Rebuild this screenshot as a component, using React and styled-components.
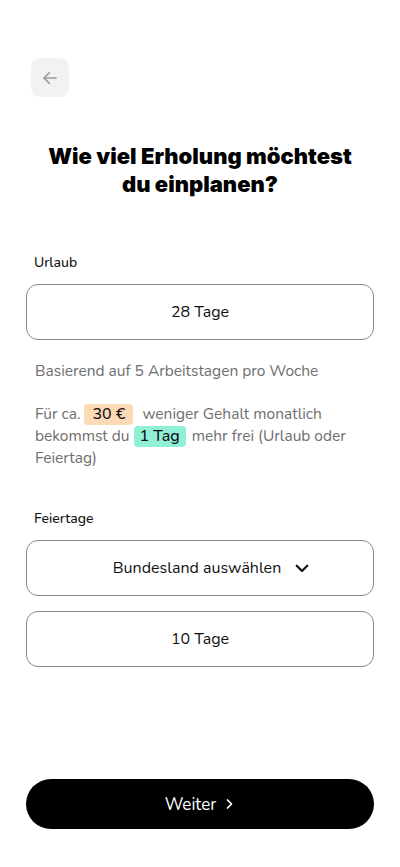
import React from "react";
import styled, { createGlobalStyle } from "styled-components";

const Global = createGlobalStyle`
  html, body { margin: 0; padding: 0; background: #fff; }
  body { font-family: "Nunito", "Noto Sans", "Open Sans", sans-serif; color: #111; }
  * { box-sizing: border-box; }
`;

const Page = styled.div`
  width: 400px;
  min-height: 867px;
  padding: 58px 26px 38px;
  display: flex;
  flex-direction: column;
`;

const BackButton = styled.button`
  width: 38px;
  height: 39px;
  margin-left: 5px;
  border: none;
  border-radius: 9px;
  background: #f2f2f2;
  display: flex;
  align-items: center;
  justify-content: center;
  padding: 0;
`;

const Title = styled.h1`
  margin: 45px 0 0;
  text-align: center;
  font-family: Inter, "Liberation Sans", sans-serif;
  font-weight: 900;
  font-size: 22px;
  line-height: 28px;
  letter-spacing: 0;
  color: #000;
`;

const Section = styled.section`
  display: flex;
  flex-direction: column;
  margin-top: ${(p) => p.$top}px;
`;

const Label = styled.div`
  font-size: 14px;
  font-weight: 500;
  margin-left: 8px;
  margin-bottom: 12px;
  color: #111;
`;

const Field = styled.div`
  height: 56px;
  border: 1px solid #8a8a8a;
  border-radius: 12px;
  display: flex;
  align-items: center;
  justify-content: center;
  gap: 12px;
  font-size: 16px;
  color: #111;
  margin-bottom: ${(p) => p.$gap || 0}px;
  padding-left: ${(p) => (p.$select ? 24 : 0)}px;
`;

const Hint = styled.p`
  margin: 0 0 0 9px;
  font-size: 15.5px;
  line-height: 22px;
  color: #6e6e6e;
  margin-top: ${(p) => p.$top}px;
`;

const Badge = styled.span`
  display: inline-block;
  padding: 0 ${(p) => p.$pad}px;
  line-height: 21px;
  border-radius: 4px;
  color: #111;
  font-size: 16px;
  font-weight: 500;
  background: ${(p) => p.$bg};
  margin: 0 ${(p) => p.$mr}px 0 4px;
`;

const Spacer = styled.div`
  flex: 1;
`;

const PrimaryButton = styled.button`
  height: 50px;
  width: 100%;
  border: none;
  border-radius: 25px;
  background: #000;
  color: #fff;
  font-family: inherit;
  font-size: 17px;
  display: flex;
  align-items: center;
  justify-content: center;
  gap: 7px;
`;

export default function App() {
  return (
    <>
      <Global />
      <Page>
        <BackButton aria-label="Zurück">
          <svg width="18" height="18" viewBox="0 0 24 24" fill="none" stroke="#9a9a9a" strokeWidth="2.2" strokeLinecap="round" strokeLinejoin="round">
            <path d="M20 12H4" />
            <path d="M11 5l-7 7 7 7" />
          </svg>
        </BackButton>
        <Title>
          Wie viel Erholung möchtest
          <br />
          du einplanen?
        </Title>

        <Section $top={55}>
          <Label>Urlaub</Label>
          <Field>28 Tage</Field>
          <Hint $top={20}>Basierend auf 5 Arbeitstagen pro Woche</Hint>
          <Hint $top={21}>
            Für ca.<Badge $bg="#fcdab5" $mr={5} $pad={8}>30 €</Badge> weniger Gehalt monatlich
            bekommst du<Badge $bg="#8ff0d6" $mr={2} $pad={6}>1 Tag</Badge> mehr frei (Urlaub oder Feiertag)
          </Hint>
        </Section>

        <Section $top={40}>
          <Label>Feiertage</Label>
          <Field $select $gap={15}>
            Bundesland auswählen
            <svg width="18" height="18" viewBox="0 0 24 24" fill="none" stroke="#111" strokeWidth="3" strokeLinecap="round" strokeLinejoin="round">
              <path d="M5 9l7 7 7-7" />
            </svg>
          </Field>
          <Field>10 Tage</Field>
        </Section>

        <Spacer />
        <PrimaryButton>
          Weiter
          <svg width="12" height="12" viewBox="0 0 24 24" fill="none" stroke="#fff" strokeWidth="3.5" strokeLinecap="round" strokeLinejoin="round">
            <path d="M9 4l8 8-8 8" />
          </svg>
        </PrimaryButton>
      </Page>
    </>
  );
}
